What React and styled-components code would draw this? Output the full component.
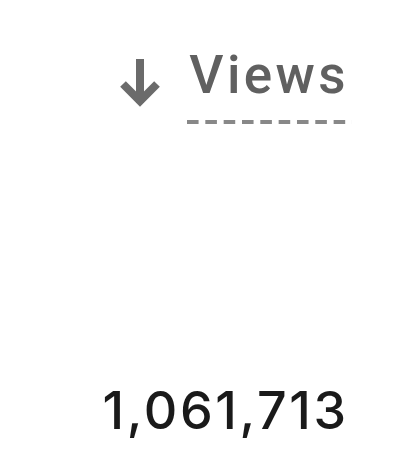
import React from "react";
import styled, { createGlobalStyle } from "styled-components";

const Global = createGlobalStyle`
  html, body { margin: 0; padding: 0; background: #ffffff; }
`;

const Page = styled.div`
  width: 406px;
  height: 461px;
  box-sizing: border-box;
  display: flex;
  flex-direction: column;
  align-items: flex-end;
  padding: 44px 60px 0 0;
`;

const Header = styled.div`
  display: flex;
  align-items: flex-start;
  gap: 27px;
  margin-right: -6px;
`;

const ArrowBox = styled.svg`
  width: 40px;
  height: 48px;
  margin-top: 15px;
  flex: none;
`;

const Label = styled.div`
  font-family: Roboto, "Liberation Sans", sans-serif;
  font-weight: 500;
  font-size: 53px;
  line-height: 62px;
  letter-spacing: 3.4px;
  color: #606060;
  padding: 0 3px 18px 2px;
  background-image: linear-gradient(
    to right,
    #888888 0,
    #888888 12px,
    transparent 12px,
    transparent 18px
  );
  background-size: 18px 4px;
  background-position: left bottom;
  background-repeat: round no-repeat;
`;

const Value = styled.div`
  margin-top: 257px;
  margin-right: -2.6px;
  font-family: Inter, "Liberation Sans", sans-serif;
  font-weight: 500;
  font-size: 52px;
  line-height: 60px;
  letter-spacing: 2.6px;
  color: #1a1a1a;
`;

export default function App() {
  return (
    <>
      <Global />
      <Page>
        <Header>
          <ArrowBox viewBox="0 0 40 48">
            <rect x="16" y="0" width="8" height="44" fill="#6b6b6b" />
            <polyline
              points="3,25 20,42 37,25"
              fill="none"
              stroke="#6b6b6b"
              strokeWidth="8"
              strokeLinejoin="miter"
            />
          </ArrowBox>
          <Label>Views</Label>
        </Header>
        <Value>1,061,713</Value>
      </Page>
    </>
  );
}
